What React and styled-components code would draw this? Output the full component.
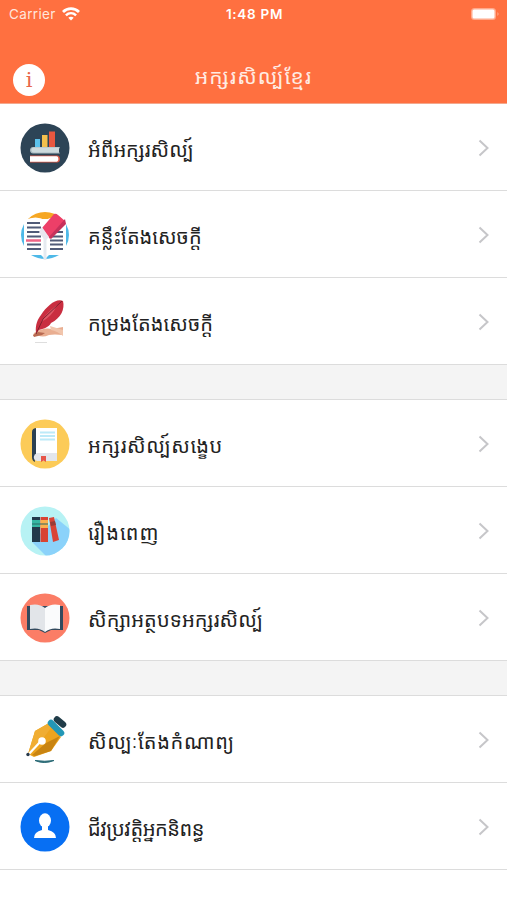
import React from "react";
import styled, { createGlobalStyle } from "styled-components";

const GlobalStyle = createGlobalStyle`
  * {
    box-sizing: border-box;
  }
  body {
    margin: 0;
    background: #fff;
    font-family: "Inter", "Liberation Sans", sans-serif;
  }
`;

const Screen = styled.div`
  height: 900px;
  overflow: hidden;
  background: #fff;
`;

const Header = styled.header`
  height: 104px;
  background: #ff7040;
  color: #fff;
  border-bottom: 1px solid #f3a88d;
`;

const StatusBar = styled.div`
  display: grid;
  grid-template-columns: 1fr auto 1fr;
  align-items: center;
  height: 27px;
  padding: 0 7px 0 9px;
  font-size: 13.5px;
`;

const Carrier = styled.div`
  display: flex;
  align-items: center;
  gap: 6px;
  letter-spacing: 0.35px;
  color: #ffe6dc;
`;

const Clock = styled.div`
  font-size: 13.5px;
  font-weight: 600;
  letter-spacing: 0.7px;
`;

const Battery = styled.svg`
  justify-self: end;
`;

const NavBar = styled.div`
  display: grid;
  grid-template-columns: 1fr auto 1fr;
  align-items: center;
  height: 76px;
  padding: 29px 13px 0;
`;

const InfoButton = styled.button`
  width: 32px;
  height: 32px;
  padding: 0;
  border: 0;
  border-radius: 50%;
  background: #fff;
  color: #e8664a;
  font: 21px/32px "DejaVu Serif", "Liberation Serif", serif;
`;

const Title = styled.h1`
  margin: -7px 0 0;
  font-family: "Noto Sans Khmer", "DejaVu Sans", sans-serif;
  font-size: 21px;
  font-weight: 400;
  letter-spacing: 1.1px;
  color: #ffece4;
  white-space: nowrap;
`;

const Section = styled.section`
  margin-bottom: 34px;
  box-shadow: 0 34px 0 #f4f4f4;

  &:last-child {
    box-shadow: none;
  }
`;

const Row = styled.div`
  display: flex;
  align-items: center;
  height: 87px;
  padding: 2px 17px 0 20px;
  background: #fff;
  border-bottom: 1px solid #dcdcdc;

  ${Section} + ${Section} &:first-child {
    height: 88px;
    border-top: 1px solid #dcdcdc;
  }
`;

const Label = styled.span`
  flex: 1;
  margin-left: 18px;
  padding-top: 4px;
  font-family: "Noto Sans Khmer", "DejaVu Sans", sans-serif;
  font-size: 20px;
  line-height: 40px;
  letter-spacing: ${({ $spacing }) => $spacing || 0}px;
  color: #222;
  white-space: nowrap;
`;

const Icon = styled.svg`
  flex: none;
  width: 50px;
  height: 50px;
`;

const Chevron = () => (
  <svg width="12" height="18" viewBox="0 0 12 18" fill="none">
    <path d="M1.500 1.500 9.500 9l-8 7.500" stroke="#c6c6c9" strokeWidth="2" />
  </svg>
);

const WifiIcon = () => (
  <svg width="18" height="14" viewBox="0 0 18 14" fill="none" stroke="#fff">
    <path d="M1 5C5.500.6 12.500.6 17 5" strokeWidth="2.800" />
    <path d="M3.900 8.300c3-2.800 7.200-2.800 10.200 0" strokeWidth="2.500" />
    <path d="M9 13.400 6.300 10.800c1.500-1.300 3.900-1.300 5.400 0z" fill="#fff" stroke="none" />
  </svg>
);

const ChartBooks = () => (
  <Icon viewBox="0 0 50 50">
    <circle cx="25" cy="25" r="24.500" fill="#2d4456" />
    <path d="M15 16h5v9h-5z" fill="#5cc2ec" />
    <path d="M22 12h5.500v13H22z" fill="#f3c04d" />
    <path d="M29 8.500h6V25h-6z" fill="#e8573f" />
    <path d="M40 24H13c-4 0-4 6.500 0 6.500h27l-1-1.500v-3z" fill="#a9bac0" />
    <path d="M39 24.500H14c-3.500 0-3.500 5 0 5h25z" fill="#cddadd" />
    <path d="M10 32.500h27c4 0 4 7 0 7H10z" fill="#d95745" />
    <path d="M10 33.300h26.500c2.500 0 2.500 5.400 0 5.400H10z" fill="#fff" />
  </Icon>
);

const EraserBook = () => (
  <Icon viewBox="0 0 50 50">
    <path d="M8 9a24 24 0 0 1 34 0z" fill="#f6a723" />
    <path d="M4 14q-6 11 0 22zM46 14q6 11 0 22zM11 45q14 8 28 0l-14-1z" fill="#4eb9e8" />
    <path d="M5 10q11-5 20 0 9-5 20 0v35H29l-4 4-4-4H5z" fill="#fff" />
    <path
      d="M7 13h13M7 17.500h14M7 22h14M7 26.500h14M7 34.500h14M7 39h14M32 22h11M30 26.500h13M30 30.500h13M30 34.500h13M30 39h13"
      stroke="#505b78"
      strokeWidth="2"
    />
    <path d="M25 27v23" stroke="#e5eaf0" strokeWidth="3" />
    <path d="M6 30.500h15" stroke="#ef6486" strokeWidth="2.500" />
    <path d="m22 18 12-14q2-1 4 1l7 6-15 18z" fill="#ed3f68" />
    <path d="m45 9 1 5-15 15-2-2z" fill="#c6315b" />
    <path d="m22 17 7 10-3 3q-3-1-7-8z" fill="#e9e6ef" />
  </Icon>
);

const QuillHand = () => (
  <Icon viewBox="0 0 50 50">
    <path d="M14 36q9-6 18-4l11-2v8q-9-1-14 0-7 3-11 0l-5 1z" fill="#e9ae91" />
    <path d="m13 38 5-3 7 1-3 2-8 2z" fill="#b86a51" />
    <path d="m30 29 13 4v6q-6-5-12-6z" fill="#f1c5ac" />
    <path d="M16 36c-1-9 2-14 5-18C27 9 36 1 43 4c2 8-2 17-12 22-2 4-8 6-12 7z" fill="#c92e40" />
    <path d="M19 28q6-11 18-20-5 12-16 17z" fill="#df5966" />
    <path d="m16 37 7-15L42 4" stroke="#80202d" strokeWidth="1" fill="none" />
    <path d="M15 45.500h12" stroke="#dedede" />
  </Icon>
);

const YellowBook = () => (
  <Icon viewBox="0 0 50 50">
    <circle cx="25" cy="25" r="24.500" fill="#fccb58" />
    <path d="M12 13q0-4 5-4v28q-3 1-2 6-3-1-3-5z" fill="#2c4052" />
    <path d="M16 9h21v26H16z" fill="#fff" />
    <path d="M17 34h20v8H17q-4-1-3-5 1-2 3-3z" fill="#e3e6eb" />
    <path d="M20 13.500h15M20 17h15M20 20.500h15" stroke="#bceaf8" strokeWidth="2" />
    <path d="M21 37h5v6l-2.500-1.500L21 43z" fill="#e65549" />
  </Icon>
);

const Binders = () => (
  <Icon viewBox="0 0 50 50">
    <defs>
      <clipPath id="binders">
        <circle cx="25" cy="25" r="24.500" />
      </clipPath>
    </defs>
    <g clipPath="url(#binders)">
      <path d="M0 0h50v50H0z" fill="#b7f2f4" />
      <path d="m12 36 24-24 15 12v30H30z" fill="#8bd2fa" />
    </g>
    <path d="M12 11h8v25h-8z" fill="#223a4b" />
    <path d="M12 14h8v7h-8z" fill="#35b8a3" />
    <path d="M20.500 11H28v25h-7.500z" fill="#d84333" />
    <path d="M20.500 14H28v8h-7.500z" fill="#fbb04e" />
    <path d="M12 18h16" stroke="#2b6866" />
    <path d="m29 12 5-1 5 23-6 2z" fill="#d94336" />
    <path d="m30 16 5-1 1 4-5 1z" fill="#993b38" />
  </Icon>
);

const OpenBook = () => (
  <Icon viewBox="0 0 50 50">
    <circle cx="25" cy="25" r="24.500" fill="#fb7d66" />
    <path d="M7 13h36v24H31l-6 3-6-3H7z" fill="#334a5e" />
    <path d="M10 12q9-2 15 3v24q-6-5-15-3z" fill="#e2e5e9" />
    <path d="M40 12q-9-2-15 3v24q6-5 15-3z" fill="#fafbfc" />
  </Icon>
);

const PenNib = () => (
  <Icon viewBox="0 0 50 50">
    <path d="m8 39 7-23 14-8 12 14-10 14-17 6z" fill="#eda41e" />
    <path d="m8 39 7-23 14-8 2 5-13 17z" fill="#f0ad32" />
    <path d="m12 40 14-12 14-7-9 15-16 5z" fill="#c98411" />
    <path d="m8 40 13-14" stroke="#fff" strokeWidth="2.200" />
    <circle cx="22" cy="26" r="3.800" fill="#fff" />
    <path d="m31 8 10 10" stroke="#2397b6" strokeWidth="6.500" strokeLinecap="round" />
    <path d="m37 4.500 6 5" stroke="#203c48" strokeWidth="6.500" strokeLinecap="round" />
    <circle cx="8" cy="39.500" r="1.700" fill="#26394a" />
    <path d="M15 45.500q10 1.500 19 0-10 4-19 0z" fill="#286975" stroke="#286975" />
  </Icon>
);

const Person = () => (
  <Icon viewBox="0 0 50 50">
    <circle cx="25" cy="25" r="24.500" fill="#076ff3" />
    <ellipse cx="25" cy="18.500" rx="6" ry="7.200" fill="#fff" />
    <path d="M22 22h6v6q8 2 8 8H14q0-6 8-8z" fill="#fff" />
  </Icon>
);

const sections = [
  [
    { label: "អំពីអក្សរសិល្ប៍", icon: ChartBooks },
    { label: "គន្លឹះតែងសេចក្តី", icon: EraserBook },
    { label: "កម្រងតែងសេចក្តី", icon: QuillHand, spacing: 0.1 },
  ],
  [
    { label: "អក្សរសិល្ប៍សង្ខេប", icon: YellowBook, spacing: 0.6 },
    { label: "រឿងពេញ", icon: Binders, spacing: 1 },
    { label: "សិក្សាអត្ថបទអក្សរសិល្ប៍", icon: OpenBook, spacing: 0.15 },
  ],
  [
    { label: "សិល្បៈតែងកំណាព្យ", icon: PenNib, spacing: 0.7 },
    { label: "ជីវប្រវត្តិអ្នកនិពន្ធ", icon: Person, spacing: -0.45 },
  ],
];

const App = () => {
  return (
    <Screen>
      <GlobalStyle />
      <Header>
        <StatusBar>
          <Carrier>
            Carrier
            <WifiIcon />
          </Carrier>
          <Clock>1:48 PM</Clock>
          <Battery width="30" height="14" viewBox="0 0 30 14">
            <rect x="1" y="1" width="25" height="12" rx="3.500" fill="#ffa98b" />
            <rect x="2.500" y="2.500" width="22" height="9" rx="1.500" fill="#fff" />
            <path d="M27.500 5q2 2 0 4z" fill="#ffb49a" />
          </Battery>
        </StatusBar>
        <NavBar>
          <InfoButton>i</InfoButton>
          <Title>អក្សរសិល្ប៍ខ្មែរ</Title>
        </NavBar>
      </Header>
      {sections.map((rows, index) => (
        <Section key={index}>
          {rows.map(({ label, icon: RowIcon, spacing }) => (
            <Row key={label}>
              <RowIcon />
              <Label $spacing={spacing}>{label}</Label>
              <Chevron />
            </Row>
          ))}
        </Section>
      ))}
    </Screen>
  );
};

export default App;
